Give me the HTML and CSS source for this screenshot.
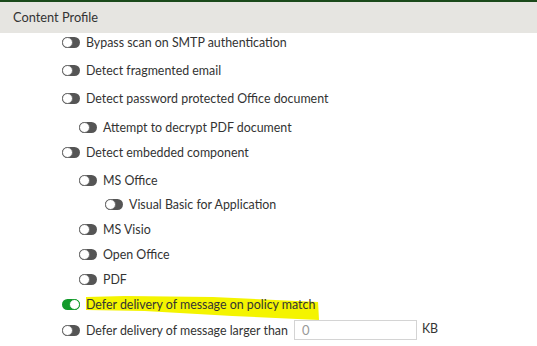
FILE: index.html
```html
<!DOCTYPE html>
<html>
<head>
<meta charset="utf-8">
<link rel="stylesheet" href="styles.css">
</head>
<body>
<div class="topline"></div>
<div class="header">Content Profile</div>
<div class="list">
  <div class="row r1"><span class="tg"></span><span>Bypass scan on SMTP authentication</span></div>
  <div class="row r28"><span class="tg"></span><span>Detect fragmented email</span></div>
  <div class="row r28"><span class="tg"></span><span>Detect password protected Office document</span></div>
  <div class="row r29 l1"><span class="tg"></span><span>Attempt to decrypt PDF document</span></div>
  <div class="row r25"><span class="tg"></span><span>Detect embedded component</span></div>
  <div class="row r28 l1"><span class="tg"></span><span>MS Office</span></div>
  <div class="row r24 l2"><span class="tg"></span><span>Visual Basic for Application</span></div>
  <div class="row r25 l1"><span class="tg"></span><span>MS Visio</span></div>
  <div class="row r25 l1"><span class="tg"></span><span>Open Office</span></div>
  <div class="row r25 l1"><span class="tg"></span><span>PDF</span></div>
  <div class="row r25 hl"><span class="tg on"></span><span class="mark">Defer delivery of message on policy match<svg class="brush" viewBox="0 0 240 26" preserveAspectRatio="none"><polygon points="0,2 40,1 130,2 238,7 239,25 150,21 60,16 0,15" fill="#f4f400"/></svg></span></div>
  <div class="row r26"><span class="tg"></span><span>Defer delivery of message larger than</span><span class="inp">0</span><span class="kb">KB</span></div>
</div>
</body>
</html>
```
FILE: styles.css
```css
html, body {
  margin: 0;
  padding: 0;
  background: #fff;
}
body {
  width: 537px;
  height: 346px;
  overflow: hidden;
  font-family: Lato, "Open Sans", sans-serif;
  color: #333;
}
.topline {
  height: 2px;
  background: #1b4a1b;
}
.header {
  height: 31px;
  background: #e6e5e1;
  font-size: 12.8px;
  line-height: 31px;
  padding-left: 13px;
  color: #333;
}
.list {
  display: flex;
  flex-direction: column;
}
.row {
  display: flex;
  align-items: center;
  height: 20px;
  padding-left: 62px;
  font-size: 12.4px;
  white-space: nowrap;
}
.r1 { margin-top: -1px; }
.r24 { margin-top: 4px; }
.r25 { margin-top: 5px; }
.r26 { margin-top: 6px; }
.r28 { margin-top: 8px; }
.r29 { margin-top: 9px; }
.l1 { padding-left: 79px; }
.l2 { padding-left: 105px; }
.tg {
  position: relative;
  width: 18px;
  height: 11px;
  border-radius: 6px;
  background: #555;
  margin-right: 6px;
  flex: none;
}
.tg::after {
  content: "";
  position: absolute;
  left: 0;
  top: 0;
  width: 9px;
  height: 9px;
  border-radius: 50%;
  background: #fff;
  border: 1px solid #6a6a6a;
}
.tg.on {
  background: #129a2a;
}
.tg.on::after {
  left: 7px;
  border-color: #129a2a;
}
.mark {
  position: relative;
  z-index: 0;
}
.brush {
  position: absolute;
  left: 0;
  top: -2px;
  width: 234px;
  height: 26px;
  z-index: -1;
}
.inp {
  width: 114px;
  height: 18px;
  border: 1px solid #d4d4d4;
  margin-left: 6px;
  padding-left: 7px;
  line-height: 18px;
  color: #999;
  font-size: 13px;
}
.kb {
  margin-left: 5px;
  margin-top: -3px;
}
```
